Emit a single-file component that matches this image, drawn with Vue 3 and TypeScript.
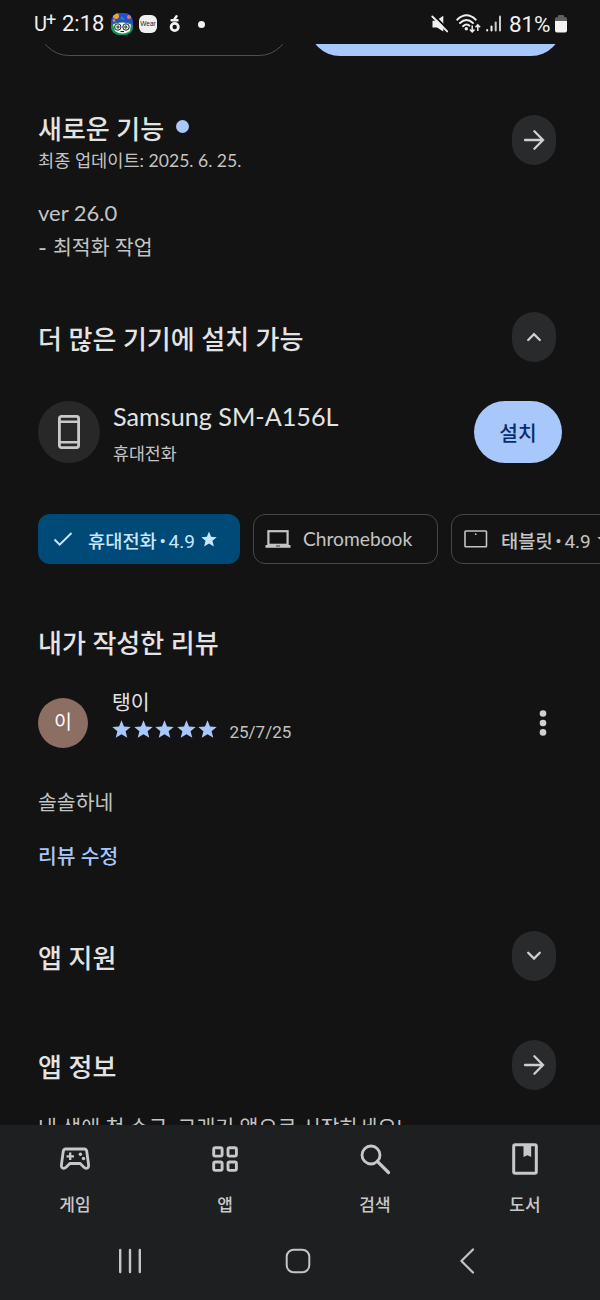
<script setup lang="ts">
interface NavItem {
  id: string
  label: string
}

const navItems: NavItem[] = [
  { id: 'games', label: '게임' },
  { id: 'apps', label: '앱' },
  { id: 'search', label: '검색' },
  { id: 'books', label: '도서' },
]

const rating = 5
const starPath =
  'M9.5 0.2 L12 6.4 L18.7 6.9 L13.6 11.2 L15.3 17.8 L9.5 14.2 L3.700 17.8 L5.4 11.2 L0.300 6.9 L7 6.4 Z'
</script>

<template>
  <div class="screen">
    <header class="status">
      <span class="carrier">U<sup>+</sup></span>
      <span class="clock">2:18</span>
      <svg class="face" width="22" height="22" viewBox="0 0 22 22">
        <defs>
          <clipPath id="faceClip"><rect width="22" height="22" rx="8.5" /></clipPath>
        </defs>
        <g clip-path="url(#faceClip)">
          <rect width="22" height="22" fill="#2b49d2" />
          <path d="M0 13 L3 9.500 L19 9.500 L22 13 V22 H0Z" fill="#119a4c" />
          <circle cx="5" cy="3" r="3" fill="#e6a441" />
          <circle cx="18" cy="4" r="2" fill="#c88a58" />
          <circle cx="3" cy="7.500" r="1.300" fill="#d99a50" />
          <path d="M9 6 L11 3 L14 7Z" fill="#169b78" />
          <path d="M2 11.500 Q11 7.500 20 11.500 L19 18 Q11 23 4 18Z" fill="#f3f5ef" />
          <g fill="none" stroke="#1b2420" stroke-width="1">
            <circle cx="6.800" cy="14" r="3.200" />
            <circle cx="15" cy="14" r="3.200" />
            <circle cx="7" cy="14" r="1.100" />
            <circle cx="14.800" cy="14" r="1.100" />
            <path d="M9.500 18.500 H13" />
          </g>
        </g>
      </svg>
      <span class="wear">Wear</span>
      <svg class="sprout" width="12" height="20" viewBox="0 0 12 20">
        <circle cx="5.700" cy="13" r="3.600" fill="none" stroke="#f2f2f2" stroke-width="2.800" />
        <path d="M2.600 6.200 H8.500 M5.300 5.400 L7.500 2.300" fill="none" stroke="#f2f2f2" stroke-width="2.500" stroke-linecap="round" />
      </svg>
      <i class="more-dot"></i>
      <svg class="mute" width="18" height="18" viewBox="0 0 18 18">
        <path d="M1.500 5.800 H5 L12.300 0.800 V16.500 L6 12.500 H1.500Z" fill="#f0f0f0" />
        <path d="M2.200 -0.200 L18.600 16.100" stroke="#131313" stroke-width="2" />
        <path d="M1.300 1.500 L16.200 16.400" stroke="#f0f0f0" stroke-width="1.900" stroke-linecap="round" />
      </svg>
      <svg class="wifi" width="26" height="20" viewBox="0 0 26 20">
        <g fill="none" stroke="#f0f0f0" stroke-width="1.900" stroke-linecap="round">
          <path d="M1.200 5.700 Q10.500 -3 19.800 5.700" />
          <path d="M4 9 Q10.500 3 17 9" />
          <path d="M7 12.200 Q10.500 9 13.500 11.700" />
        </g>
        <circle cx="10.300" cy="14.800" r="1.700" fill="#f0f0f0" />
        <path d="M16.200 11.500 V17.500 M13.900 15.400 L16.200 17.800 L18.500 15.400 M21.800 17 V11 M19.500 13.200 L21.800 10.800 L24.100 13.200" fill="none" stroke="#f0f0f0" stroke-width="1.500" />
      </svg>
      <svg class="signal" width="16" height="18" viewBox="0 0 16 18">
        <g stroke-width="2" stroke-linecap="round" stroke="#f0f0f0">
          <path d="M1.200 15 V15.500" />
          <path d="M5.500 11.500 V15.500" />
          <path d="M9.700 7.500 V15.500" stroke="#c9c9c9" />
          <path d="M14 1.500 V15.500" stroke="#c9c9c9" />
        </g>
      </svg>
      <span class="percent">81%</span>
      <svg class="battery" width="12" height="18" viewBox="0 0 12 18">
        <path d="M0 6 V4 Q0 2 2 2 H3 V1 Q3 0 4 0 H8 Q9 0 9 1 V2 H10 Q12 2 12 4 V6Z" fill="#606060" />
        <path d="M0 6 H12 V15.500 Q12 17.500 10 17.500 H2 Q0 17.500 0 15.500Z" fill="#f3f3f3" />
      </svg>
    </header>

    <main class="content">
      <div class="top-actions">
        <div class="pill outline"></div>
        <div class="pill filled"></div>
      </div>

      <section class="row whats-new">
        <div>
          <h2>새로운 기능<i class="new-dot"></i></h2>
          <p class="updated">최종 업데이트: 2025. 6. 25.</p>
        </div>
        <button class="round">
          <svg width="22" height="22" viewBox="0 0 22 22"><path d="M2 11 H19.500 M11.400 2.300 L20 11 L11.400 19.700" /></svg>
        </button>
      </section>
      <p class="body version">ver 26.0</p>
      <p class="body change"><span class="dash">-</span>최적화 작업</p>

      <section class="row devices">
        <h2>더 많은 기기에 설치 가능</h2>
        <button class="round">
          <svg width="22" height="22" viewBox="0 0 22 22"><path d="M5.200 14 L11 8.200 L16.800 14" /></svg>
        </button>
      </section>

      <section class="device">
        <div class="device-icon">
          <svg width="22" height="34" viewBox="0 0 22 34">
            <rect x="1.400" y="1.400" width="19.200" height="31.200" rx="2" fill="none" stroke="#c9c9c9" stroke-width="2.800" />
            <path d="M1.500 6.800 H20.500 M1.500 27.200 H20.500" stroke="#c9c9c9" stroke-width="2.500" />
          </svg>
        </div>
        <div class="device-text">
          <p class="device-name">Samsung SM-A156L</p>
          <p class="device-kind">휴대전화</p>
        </div>
        <button class="install">설치</button>
      </section>

      <div class="chips">
        <div class="chip selected">
          <svg class="check" width="20" height="16" viewBox="0 0 20 16"><path d="M1.500 8.500 L6.700 13.700 L18.500 2" fill="none" stroke="#c9e6ff" stroke-width="2" /></svg>
          <span class="rated"><b>휴대전화</b> • 4.9</span>
          <svg class="chip-star" width="16" height="16" viewBox="0 0 19 18"><path :d="starPath" fill="#c9e6ff" /></svg>
        </div>
        <div class="chip laptop">
          <svg width="26" height="20" viewBox="0 0 26 20">
            <rect x="3.400" y="2.200" width="19.200" height="13.600" fill="none" stroke="#c4c4c4" stroke-width="2.200" />
            <path d="M0.500 16 H25.500 V18.800 H0.500Z" fill="#c4c4c4" />
            <path d="M11 17 H15" stroke="#3a3a3a" stroke-width="1" />
          </svg>
          <span class="model">Chromebook</span>
        </div>
        <div class="chip tablet">
          <svg width="24" height="18" viewBox="0 0 24 18">
            <rect x="1" y="1" width="21.500" height="15.700" rx="0.800" fill="none" stroke="#c4c4c4" stroke-width="1.600" />
            <circle cx="11.700" cy="4.200" r="0.900" fill="#c4c4c4" />
          </svg>
          <span class="rated"><b>태블릿</b> • 4.9</span>
          <svg class="chip-star" width="16" height="16" viewBox="0 0 19 18"><path :d="starPath" fill="#c4c4c4" /></svg>
        </div>
      </div>

      <h2 class="review-title">내가 작성한 리뷰</h2>
      <section class="review">
        <div class="avatar">이</div>
        <div class="review-meta">
          <p class="reviewer">탱이</p>
          <div class="stars">
            <svg v-for="n in rating" :key="n" width="19" height="18" viewBox="0 0 19 18"><path :d="starPath" fill="#a8c7fa" /></svg>
            <span class="date">25/7/25</span>
          </div>
        </div>
        <svg class="kebab" width="8" height="28" viewBox="0 0 8 28">
          <g fill="#d0d0d0"><circle cx="4" cy="4.500" r="3.300" /><circle cx="4" cy="14" r="3.300" /><circle cx="4" cy="23.400" r="3.300" /></g>
        </svg>
      </section>
      <p class="body comment">솔솔하네</p>
      <p class="edit">리뷰 수정</p>

      <section class="row support">
        <h2>앱 지원</h2>
        <button class="round">
          <svg width="22" height="22" viewBox="0 0 22 22"><path d="M5.200 7.700 L11 13.500 L16.800 7.700" /></svg>
        </button>
      </section>
      <section class="row about">
        <h2>앱 정보</h2>
        <button class="round">
          <svg width="22" height="22" viewBox="0 0 22 22"><path d="M2 11 H19.500 M11.400 2.300 L20 11 L11.400 19.700" /></svg>
        </button>
      </section>
      <p class="body summary">내 생애 첫 수구, 그래기 앱으로 시작하세요!</p>
    </main>

    <footer class="bottom">
      <nav class="tabs">
        <a v-for="item in navItems" :key="item.id" class="tab">
          <svg v-if="item.id === 'games'" width="34" height="34" viewBox="0 0 34 34">
            <path d="M7.700 7 H26.300 Q28.100 7 28.700 9 L30.600 23 Q30.700 26.300 28.400 26.300 Q27 26.300 25.700 25 L22.200 21.500 H11.800 L8.300 25 Q7 26.300 5.600 26.300 Q3.300 26.300 3.400 23 L5.300 9 Q5.900 7 7.700 7Z" fill="none" stroke="#c7c8ca" stroke-width="2.800" stroke-linejoin="round" />
            <path d="M8.500 14.300 H16 M12.200 10.600 V18" stroke="#c7c8ca" stroke-width="2.300" />
            <circle cx="22.400" cy="12.200" r="1.700" fill="#c7c8ca" /><circle cx="25.500" cy="16.500" r="1.700" fill="#c7c8ca" />
          </svg>
          <svg v-else-if="item.id === 'apps'" width="34" height="34" viewBox="0 0 34 34">
            <g fill="none" stroke="#c7c8ca" stroke-width="2.900">
              <rect x="5.700" y="5.700" width="8.400" height="8.400" rx="1.600" />
              <rect x="20" y="5.700" width="8.400" height="8.400" rx="1.600" />
              <rect x="5.700" y="20" width="8.400" height="8.400" rx="1.600" />
              <rect x="20" y="20" width="8.400" height="8.400" rx="1.600" />
            </g>
          </svg>
          <svg v-else-if="item.id === 'search'" width="34" height="34" viewBox="0 0 34 34">
            <circle cx="13" cy="13" r="9" fill="none" stroke="#c7c8ca" stroke-width="2.800" />
            <path d="M19.300 19.300 L30.500 30.500" stroke="#c7c8ca" stroke-width="3.200" stroke-linecap="round" />
          </svg>
          <svg v-else width="34" height="34" viewBox="0 0 34 34">
            <rect x="5.700" y="2.700" width="22.600" height="28.600" rx="1.500" fill="none" stroke="#c7c8ca" stroke-width="3" />
            <path d="M15.500 3 H23.200 V15 L19.400 13.200 L15.500 15Z" fill="#c7c8ca" />
          </svg>
          <span>{{ item.label }}</span>
        </a>
      </nav>
      <div class="system">
        <svg width="24" height="26" viewBox="0 0 24 26"><path d="M2.200 2 V24 M12 2 V24 M21.800 2 V24" stroke-width="2.400" /></svg>
        <svg width="26" height="26" viewBox="0 0 26 26"><rect x="1.700" y="1.700" width="22.600" height="22.600" rx="7" stroke-width="2" /></svg>
        <svg width="16" height="26" viewBox="0 0 16 26"><path d="M14 1.500 L2.400 13 L14 24.500" stroke-width="2.200" /></svg>
      </div>
    </footer>
  </div>
</template>

<style>
html,
body {
  margin: 0;
  background: #131313;
}
</style>

<style scoped>
.screen {
  width: 600px;
  height: 1300px;
  display: flex;
  flex-direction: column;
  overflow: hidden;
  background: #131313;
  color: #e3e3e3;
  font-family: Lato, 'Noto Sans CJK KR', sans-serif;
}
.screen * {
  box-sizing: border-box;
  flex-shrink: 0;
}
p,
h2 {
  margin: 0;
  white-space: nowrap;
}
svg {
  display: block;
  overflow: visible;
}
button {
  border: 0;
  padding: 0;
  display: flex;
  align-items: center;
  justify-content: center;
}
.status {
  height: 44px;
  display: flex;
  align-items: center;
  padding: 4px 0 0 34px;
  color: #f0f0f0;
  font-family: Roboto, sans-serif;
  font-size: 22px;
  line-height: 40px;
  white-space: nowrap;
}
.carrier {
  width: 28px;
  font-size: 20px;
  letter-spacing: -1px;
}
.carrier sup {
  font-size: 18px;
  line-height: 0;
  vertical-align: 5px;
}
.clock {
  width: 49px;
}
.wear {
  width: 18px;
  height: 18px;
  margin: 0 12px 0 6px;
  border-radius: 6px;
  background: #efefef;
  color: #222;
  font: 6.5px/18px 'Liberation Sans', sans-serif;
  text-align: center;
}
.more-dot {
  width: 7px;
  height: 7px;
  margin: 0 226px 0 17px;
  border-radius: 50%;
  background: #f2f2f2;
}
.mute {
  margin-right: 7px;
}
.signal {
  margin: 0 7px 0 4px;
}
.percent {
  width: 46px;
  font-size: 22.5px;
  letter-spacing: -0.2px;
}
.content {
  height: 1081px;
  overflow: hidden;
}
.top-actions {
  display: flex;
  gap: 19px;
  height: 12px;
  padding-left: 38px;
}
.pill {
  width: 252px;
  height: 62px;
  margin-top: -50px;
  border-radius: 31px;
}
.outline {
  border: 1.5px solid #4f4f4f;
}
.filled {
  width: 253px;
  background: #a8c7fa;
}
.row {
  display: flex;
  justify-content: space-between;
  height: 50px;
  padding: 0 44px 0 38px;
}
h2 {
  font-size: 26px;
  line-height: 50px;
  font-weight: 500;
}
.row > h2 {
  padding-top: 2px;
}
.round {
  width: 44px;
  height: 50px;
  border-radius: 22px;
  background: #282a2b;
}
.round path {
  fill: none;
  stroke: #cfcfcf;
  stroke-width: 2.3;
  stroke-linecap: round;
}
.whats-new {
  margin-top: 59px;
}
.whats-new h2 {
  display: flex;
  align-items: center;
  height: 29px;
  line-height: 29px;
}
.new-dot {
  width: 13px;
  height: 13px;
  margin: -6px 0 0 12px;
  border-radius: 50%;
  background: #a8c7fa;
}
.updated {
  color: #c4c4c4;
  font-size: 17.6px;
  line-height: 34px;
}
.body {
  padding-left: 38px;
  color: #c4c4c4;
  font-size: 20.5px;
  line-height: 34px;
}
.version {
  margin-top: 31px;
  font-size: 22px;
}
.change {
  display: flex;
}
.dash {
  width: 15px;
  font-size: 24px;
}
.devices {
  margin-top: 48px;
}
.device {
  display: flex;
  height: 62px;
  margin: 39px 38px 0;
}
.device-icon {
  width: 62px;
  height: 62px;
  display: flex;
  align-items: center;
  justify-content: center;
  border-radius: 50%;
  background: #282828;
}
.device-text {
  width: 361px;
  margin-left: 13px;
}
.device-name {
  font-size: 25.2px;
  line-height: 31px;
}
.device-kind {
  color: #c4c4c4;
  font-size: 17.3px;
  line-height: 44px;
}
.install {
  width: 88px;
  height: 62px;
  border-radius: 31px;
  background: #a8c7fa;
  color: #062e6f;
  font-family: inherit;
  font-size: 20.3px;
  font-weight: 500;
}
.chips {
  display: flex;
  gap: 13px;
  margin-top: 51px;
  padding-left: 38px;
}
.chip {
  height: 50px;
  display: flex;
  align-items: center;
  border: 1.5px solid #474747;
  border-radius: 12px;
  color: #c4c4c4;
  font-size: 19px;
  white-space: nowrap;
}
.chip b {
  font-size: 18.700px;
  font-weight: 500;
}
.rated {
  font-family: Roboto, 'Noto Sans CJK KR', sans-serif;
  word-spacing: -2px;
}
.model {
  padding-bottom: 2px;
  font-size: 19.2px;
}
.selected {
  width: 202px;
  padding-left: 15px;
  border: 0;
  background: #004a77;
  color: #c9e6ff;
}
.check {
  margin-right: 15px;
}
.chip-star {
  margin-left: 6px;
}
.laptop {
  width: 185px;
  padding-left: 11px;
}
.laptop svg {
  margin-right: 12px;
}
.tablet {
  width: 202px;
  padding-left: 12px;
}
.tablet svg:first-child {
  margin-right: 13px;
}
.review-title {
  margin-top: 54px;
  padding-left: 38px;
}
.review {
  display: flex;
  height: 60px;
  margin-top: 20px;
  padding-left: 38px;
}
.avatar {
  width: 50px;
  height: 50px;
  margin-top: 10px;
  border-radius: 50%;
  background: #8d6e63;
  color: #fff;
  font-size: 19.5px;
  line-height: 48px;
  text-align: center;
}
.review-meta {
  width: 426px;
  margin-left: 24px;
}
.reviewer {
  font-size: 20.5px;
  line-height: 28px;
}
.stars {
  display: flex;
  gap: 2.5px;
  margin-top: 4px;
}
.date {
  margin-left: 10px;
  color: #c4c4c4;
  font-family: Roboto, sans-serif;
  font-size: 17px;
  line-height: 24px;
}
.kebab {
  margin-top: 21px;
  margin-left: 1px;
}
.comment {
  margin-top: 37px;
}
.edit {
  margin-top: 20px;
  padding-left: 38px;
  color: #a8c7fa;
  font-size: 20.4px;
  font-weight: 500;
  line-height: 34px;
}
.support {
  margin-top: 58px;
}
.about {
  margin-top: 59px;
}
.summary {
  margin-top: 20px;
  font-size: 20.6px;
}
.bottom {
  height: 175px;
  background: #1e1f21;
}
.tabs {
  display: grid;
  grid-template-columns: repeat(4, 1fr);
  height: 108px;
  padding-top: 17px;
}
.tab {
  display: flex;
  flex-direction: column;
  align-items: center;
  color: #c7c8ca;
  font-size: 17px;
  font-weight: 500;
  line-height: 30px;
}
.tab span {
  margin-top: 14px;
}
.system {
  display: flex;
  align-items: center;
  padding: 15px 0 0 118px;
}
.system svg {
  fill: none;
  stroke: #c4c4c4;
  stroke-linecap: round;
  stroke-linejoin: round;
}
.system svg:nth-child(2) {
  margin: 0 148px 0 143px;
}
</style>
